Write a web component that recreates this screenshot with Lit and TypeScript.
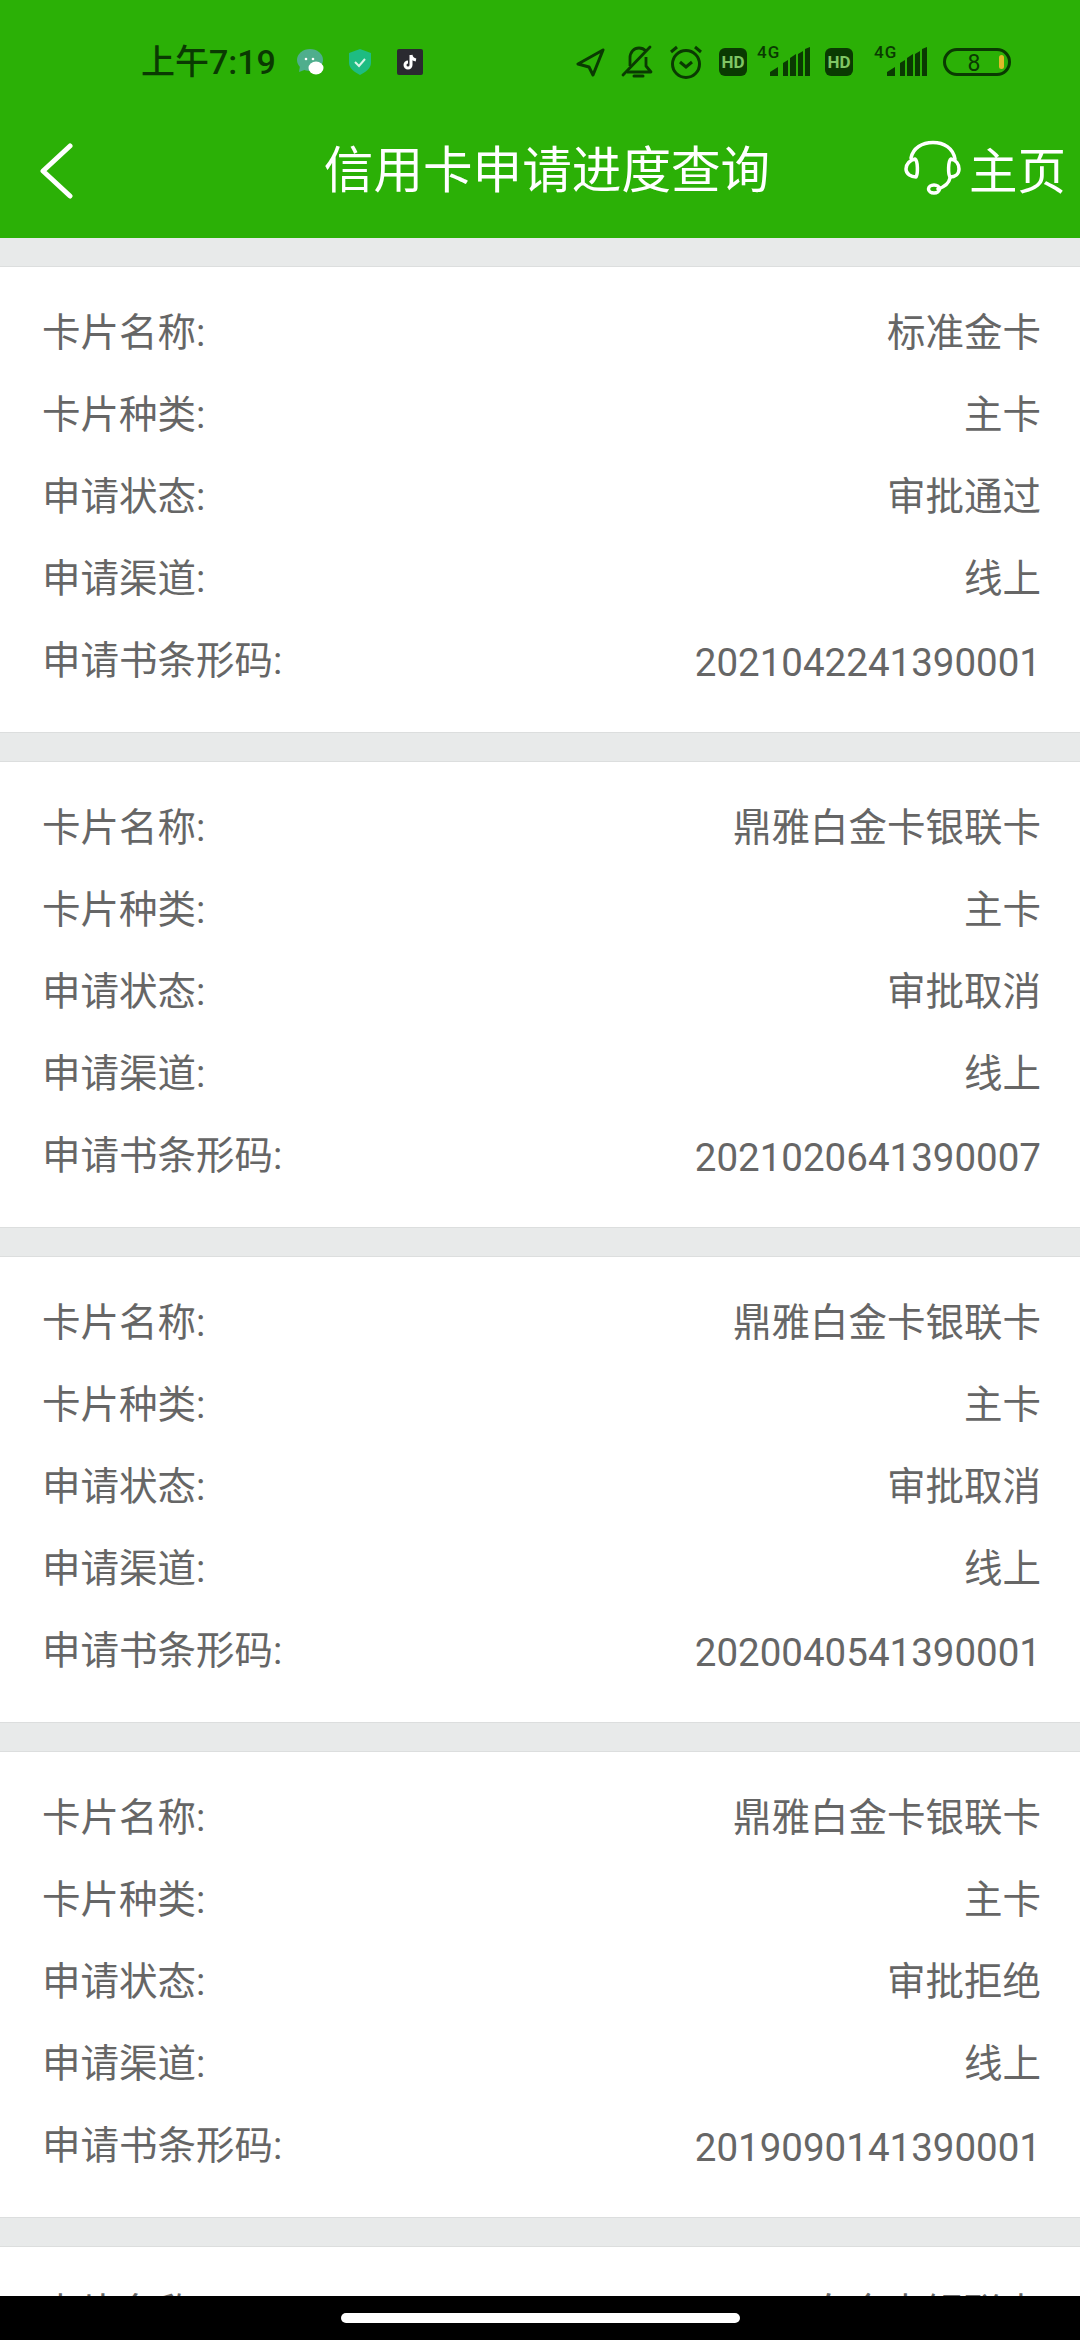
import { LitElement, html, css } from "lit";
import { customElement } from "lit/decorators.js";

const cards = [
  ["标准金卡", "审批通过", "2021042241390001"],
  ["鼎雅白金卡银联卡", "审批取消", "2021020641390007"],
  ["鼎雅白金卡银联卡", "审批取消", "2020040541390001"],
  ["鼎雅白金卡银联卡", "审批拒绝", "2019090141390001"],
];

@customElement("app-root")
export class AppRoot extends LitElement {
  static styles = css`
    :host { display: block; width: 1080px; height: 2340px; position: relative; overflow: hidden; background: #e8eaea; font-family: Roboto, "Noto Sans CJK SC", sans-serif; }
    .top { background: #2bb006; height: 238px; display: flex; flex-direction: column; }
    .status { height: 84px; padding: 40px 0 0 141px; display: flex; align-items: center; color: #0a3a02; box-sizing: border-box; }
    .time { font-size: 34px; font-weight: 500; width: 155px; line-height: 44px; white-space: nowrap; }
    .nav { flex: 1; display: flex; align-items: center; color: #fff; padding-top: 10px; position: relative; }
    .back { margin-left: 38px; margin-top: 10px; width: 36px; height: 56px; }
    .title { position: absolute; left: 0; right: 0; top: 10px; bottom: 0; display: flex; align-items: center; justify-content: center; font-size: 49.600px; font-family: "Noto Sans CJK SC", sans-serif; padding-left: 14px; }
    .home { margin-left: auto; margin-right: 14px; margin-top: 4px; display: flex; align-items: center; gap: 8px; font-size: 48.500px; font-family: "Noto Sans CJK SC", sans-serif; }
    .list { padding-top: 28px; display: flex; flex-direction: column; gap: 28px; }
    .card { background: #fff; border-top: 1px solid #dcdede; border-bottom: 1px solid #dcdede; height: 467px; box-sizing: border-box; padding: 21px 39px 0 42px; flex: none; }
    .row { height: 82px; display: flex; align-items: center; justify-content: space-between; color: #666; font-size: 38.500px; white-space: nowrap; }
    .num { margin-top: 10px; }
    .bar { position: absolute; left: 0; right: 0; bottom: 0; height: 44px; box-sizing: border-box; background: #000; display: flex; justify-content: center; align-items: flex-start; padding-top: 17px; }
    .pill { width: 399px; height: 10px; border-radius: 5px; background: #fff; }
    svg { display: block; flex: none; }
    .icons { display: flex; align-items: center; }
  `;

  private row(label: string, value: string, num = false) {
    return html`<div class="row"><span>${label}:</span><span class=${num ? "num" : ""}>${value}</span></div>`;
  }

  render() {
    const d = "#0a3a02";
    return html`
      <div class="top">
        <div class="status">
          <span class="time">上午7:19</span>
          <svg width="27" height="26" viewBox="0 0 27 26" style="margin-left:1px">
            <ellipse cx="13" cy="11" rx="13" ry="11" fill="#4fae8d"/><path d="M3 17l-1 6 8-3z" fill="#4fae8d"/>
            <ellipse cx="19" cy="19" rx="7.500" ry="6.500" fill="#fff"/><circle cx="9" cy="10" r="1.300" fill="#fff"/><circle cx="16" cy="10" r="1.300" fill="#fff"/>
          </svg>
          <svg width="24" height="26" viewBox="0 0 24 26" style="margin-left:24px">
            <path d="M12 0l11 4v10c0 5-5 9-11 12C6 23 1 19 1 14V4z" fill="#1ebc82"/>
            <path d="M7 13l4 4 6-7" fill="none" stroke="#d8f5e8" stroke-width="2"/>
          </svg>
          <svg width="26" height="26" viewBox="0 0 26 26" style="margin-left:25px">
            <rect width="26" height="26" rx="2" fill="#2a2a30"/>
            <path d="M14 6v10a3 3 0 1 1-3-3M14 6c.5 3 2.500 4.500 5 5" fill="none" stroke="#fff" stroke-width="3"/>
          </svg>
          <div class="icons" style="margin-left:152px">
            <svg width="30" height="30" viewBox="0 0 30 30">
              <path d="M28 3L3 17l11 3 4 8z" fill="none" stroke="${d}" stroke-width="3" stroke-linejoin="round"/>
            </svg>
            <svg width="32" height="34" viewBox="0 0 32 34" style="margin-left:16px">
              <path d="M9 21v-8c0-6 4-10 9-10 3 0 5 1 7 3M25 12v9l5 6H6" fill="none" stroke="${d}" stroke-width="2.800" stroke-linejoin="round"/>
              <path d="M2 30L29 2" stroke="${d}" stroke-width="2.800" stroke-linecap="round"/>
              <path d="M13 31h9" stroke="${d}" stroke-width="3" stroke-linecap="round"/>
            </svg>
            <svg width="36" height="36" viewBox="0 0 36 36" style="margin-left:15px">
              <circle cx="18" cy="20" r="13.500" fill="none" stroke="${d}" stroke-width="3"/>
              <path d="M12 18l6 5 6-5M3 8l6-5M33 8l-6-5" fill="none" stroke="${d}" stroke-width="3"/>
            </svg>
            ${this.hd(15)}
            ${this.signal(false, 10)}
            ${this.hd(15)}
            ${this.signal(true, 18)}
            <svg width="68" height="30" viewBox="0 0 68 30" style="margin-left:16px">
              <rect x="1.500" y="2.500" width="65" height="25" rx="12.500" fill="none" stroke="${d}" stroke-width="3"/>
              <rect x="56" y="8" width="5" height="14" rx="2.500" fill="#e0b92a"/>
              <text x="31" y="23.500" font-size="23" text-anchor="middle" fill="${d}" font-family="Roboto">8</text>
            </svg>
          </div>
        </div>
        <div class="nav">
          <svg class="back" viewBox="0 0 36 56"><path d="M32 3L5 28l27 25" fill="none" stroke="#fff" stroke-width="5" stroke-linecap="round" stroke-linejoin="round"/></svg>
          <div class="title">信用卡申请进度查询</div>
          <div class="home">
            <svg width="58" height="56" viewBox="0 0 58 56">
              <path d="M8 18C10 8 19 2.500 30 2.500S50 8 52 19" fill="none" stroke="#fff" stroke-width="3.500" stroke-linecap="round"/>
              <path d="M12 19c-5 1-9 5-9 10s5 8 10 8c2-3 2-16-1-18zM48 19c5 1 8 5 8 10s-4 8-9 8c-2-3-2-16 1-18z" fill="none" stroke="#fff" stroke-width="3.500" stroke-linejoin="round"/>
              <path d="M47 38c-1 5-6 9-12 11" fill="none" stroke="#fff" stroke-width="3.500" stroke-linecap="round"/>
              <ellipse cx="31" cy="49" rx="5.500" ry="4" fill="none" stroke="#fff" stroke-width="3.500"/>
            </svg>
            <span>主页</span>
          </div>
        </div>
      </div>
      <div class="list">
        ${cards.map((c) => html`<div class="card">
          ${this.row("卡片名称", c[0])}
          ${this.row("卡片种类", "主卡")}
          ${this.row("申请状态", c[1])}
          ${this.row("申请渠道", "线上")}
          ${this.row("申请书条形码", c[2], true)}
        </div>`)}
        <div class="card">${this.row("卡片名称", "白金卡银联卡")}</div>
      </div>
      <div class="bar"><div class="pill"></div></div>
    `;
  }

  private hd(ml: number) {
    return html`<svg width="28" height="28" viewBox="0 0 28 28" style="margin-left:${ml}px">
      <rect width="28" height="28" rx="6" fill="#0a3a02"/>
      <text x="14" y="20" font-size="17" font-weight="700" text-anchor="middle" fill="#7fc664" font-family="Roboto">HD</text>
    </svg>`;
  }

  private signal(arrows: boolean, ml: number) {
    const d = "#0a3a02";
    const o = arrows ? 3 : 0;
    const w = 53 + o;
    return html`<svg width=${w} height="44" viewBox="0 -5 ${w} 44" style="margin-left:${ml}px">
      <text x=${o} y="13" font-size="17" font-weight="500" letter-spacing="1" fill="${d}" font-family="Roboto">4G</text>
      ${arrows ? html`<path d="M3 33V22M1 24.500l2-2.500M8 22v11M8 33l2-2.500" stroke="${d}" stroke-width="1.800" fill="none"/>` : ""}
      <path transform="translate(${o} 0)" d="M13 31v-4l8-5v9zM26 31V18l5-3v16zM33 31V13l6-4v22zM41 31V9l5-3v25zM48 31V4l5-2v29z" fill="${d}"/>
    </svg>`;
  }
}
